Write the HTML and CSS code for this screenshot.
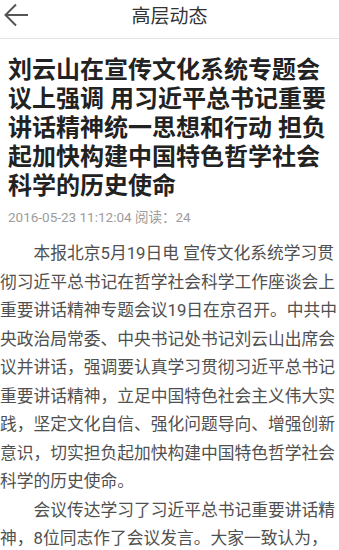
FILE: index.html
```html
<!DOCTYPE html>
<html lang="zh-CN">
<head>
<meta charset="utf-8">
<title>高层动态</title>
<link rel="stylesheet" href="styles.css">
</head>
<body>
<header class="topbar">
  <span class="back" aria-label="返回">
    <svg width="28" height="26" viewBox="0 0 28 26">
      <path d="M16 5.5 L5.5 16 L16 26.5 M5.5 16 H30" fill="none" stroke="#555" stroke-width="2" stroke-linecap="butt" stroke-linejoin="miter" transform="translate(0,-3)"/>
    </svg>
  </span>
  <h1 class="topbar-title">高层动态</h1>
</header>
<main class="article">
  <h2 class="article-title">刘云山在宣传文化系统专题会议上强调 用习近平总书记重要讲话精神统一思想和行动 担负起加快构建中国特色哲学社会科学的历史使命</h2>
  <div class="meta">2016-05-23 11:12:04 阅读：24</div>
  <div class="content">
    <p>本报北京5月19日电 宣传文化系统学习贯彻习近平总书记在哲学社会科学工作座谈会上重要讲话精神专题会议19日在京召开。中共中央政治局常委、中央书记处书记刘云山出席会议并讲话，强调要认真学习贯彻习近平总书记重要讲话精神，立足中国特色社会主义伟大实践，坚定文化自信、强化问题导向、增强创新意识，切实担负起加快构建中国特色哲学社会科学的历史使命。</p>
    <p>会议传达学习了习近平总书记重要讲话精神，8位同志作了会议发言。大家一致认为，</p>
  </div>
</main>
</body>
</html>
```
FILE: styles.css
```css
html, body {
  margin: 0;
  padding: 0;
  background: #ffffff;
}
body {
  font-family: Roboto, "Noto Sans CJK SC", sans-serif;
  width: 339px;
  overflow: hidden;
}
.topbar {
  position: relative;
  height: 38px;
  border-bottom: 1px solid #e4e4e4;
  display: flex;
  align-items: center;
  justify-content: center;
}
.back {
  position: absolute;
  left: 0;
  top: 0;
  width: 32px;
  height: 30px;
  display: flex;
  align-items: center;
}
.back svg {
  display: block;
}
.topbar-title {
  margin: 0;
  margin-top: -4px;
  font-size: 19px;
  font-weight: 400;
  color: #333333;
  line-height: 24px;
}
.article-title {
  margin: 17px 8px 0 8px;
  font-size: 24px;
  line-height: 29px;
  font-weight: 700;
  color: #222222;
}
.meta {
  margin: 6px 8px 0 8px;
  font-size: 13.5px;
  line-height: 20px;
  color: #9c9c9c;
}
.content {
  margin-top: 12px;
  font-size: 16.75px;
  line-height: 28.5px;
  color: #505050;
}
.content p {
  margin: 0;
  text-indent: 2em;
}
```
